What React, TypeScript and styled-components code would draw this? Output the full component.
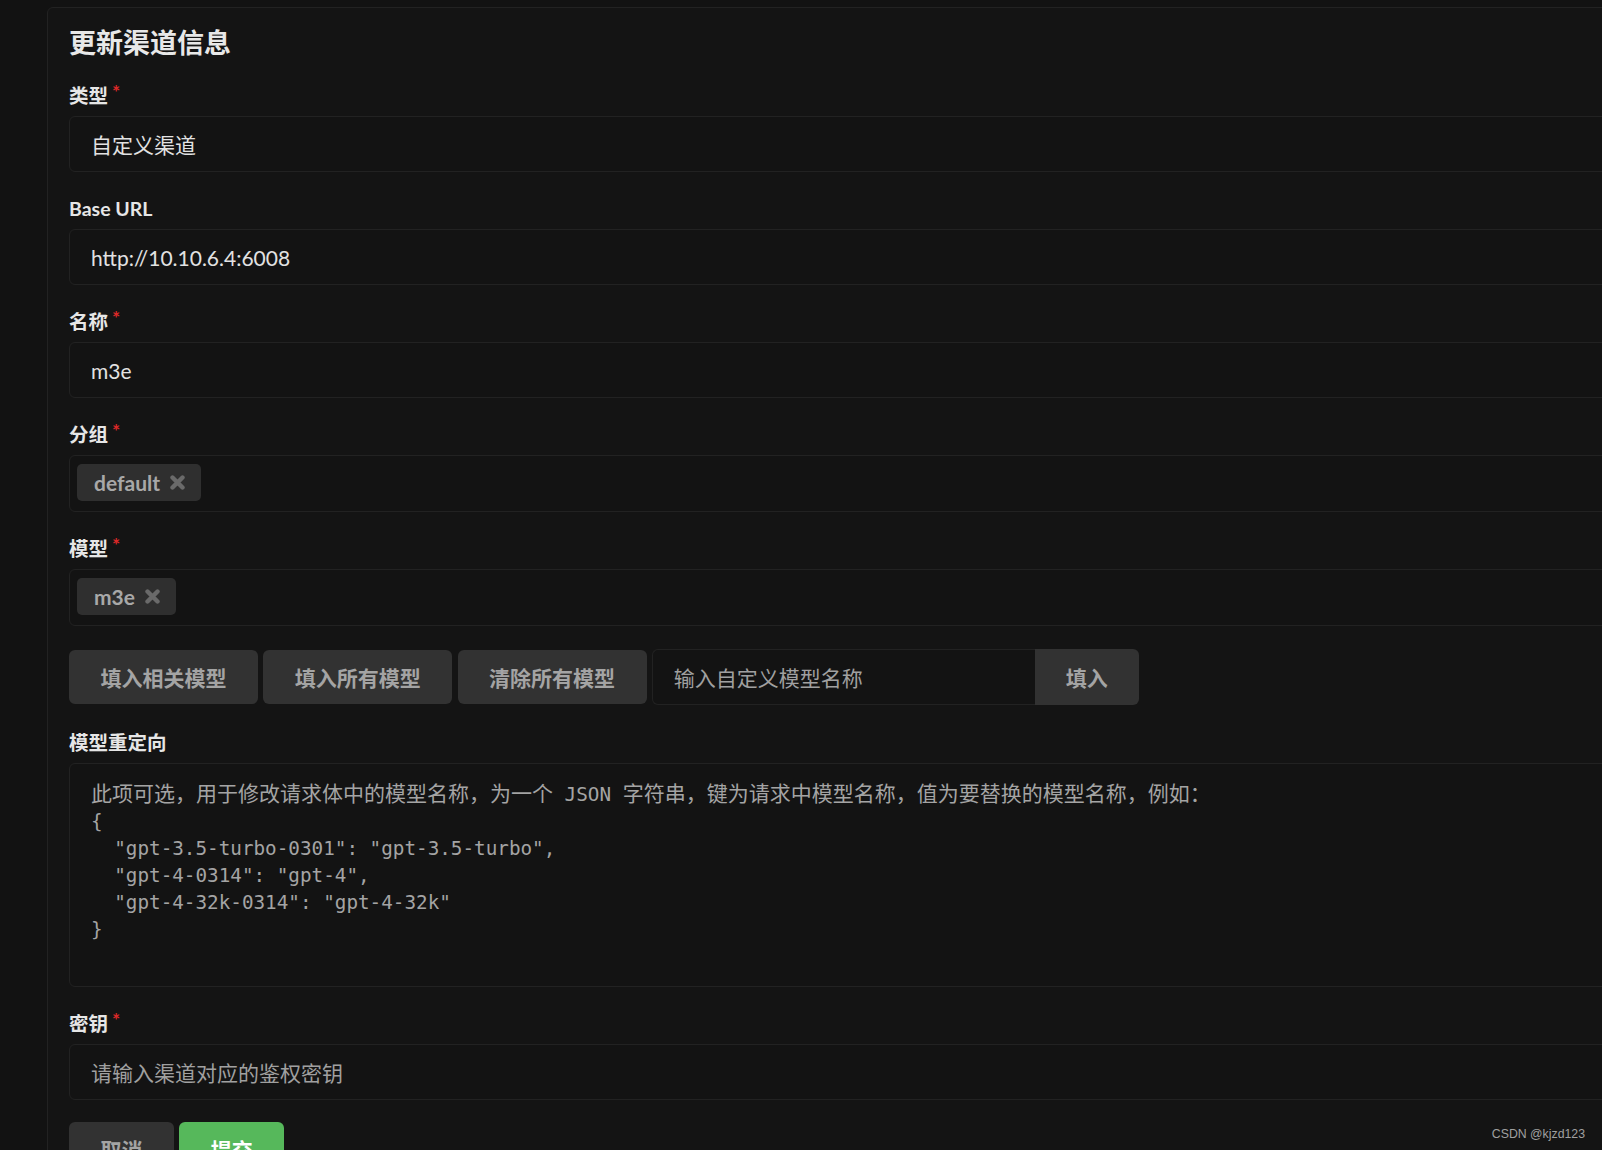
import React from 'react';
import styled, { createGlobalStyle, css } from 'styled-components';

const GlobalStyle = createGlobalStyle`
  html, body {
    margin: 0;
    padding: 0;
    background: #121212;
    overflow: hidden;
  }
  body {
    font-family: Lato, "Noto Sans CJK SC", sans-serif;
    -webkit-font-smoothing: antialiased;
  }
  * { box-sizing: border-box; }
`;

const Page = styled.div`
  position: relative;
  width: 1602px;
  height: 1150px;
  padding: 7px 0 0 47px;
  overflow: hidden;
`;

const Card = styled.div`
  width: 1700px;
  background: #141414;
  border: 1px solid #222222;
  border-radius: 6px;
  padding: 21px 21px 60px 21px;
`;

const Title = styled.h3`
  margin: 0 0 24px 0;
  font-size: 27px;
  line-height: 27px;
  font-weight: 700;
  color: #e8e8e8;
`;

const Field = styled.div<{ $mb?: number }>`
  margin-bottom: ${(p) => (p.$mb ?? 21)}px;
`;

const Label = styled.label<{ $required?: boolean }>`
  display: block;
  padding-top: 2px;
  margin-bottom: 6px;
  font-size: 19.5px;
  line-height: 28px;
  font-weight: 700;
  color: #e6e6e6;
  ${(p) =>
    p.$required &&
    css`
      &::after {
        content: '*';
        display: inline-block;
        vertical-align: top;
        margin: -0.2em 0 0 0.2em;
        color: #db2828;
      }
    `}
`;

const TextInput = styled.input`
  display: block;
  width: 100%;
  height: 56px;
  padding: 0 21px;
  margin: 0;
  background: #131313;
  border: 1px solid #222222;
  border-radius: 6px;
  font-family: Lato, "Noto Sans CJK SC", sans-serif;
  font-size: 21px;
  color: #e2e2e2;
  outline: none;
  &::placeholder {
    color: #a0a0a0;
  }
`;

const Dropdown = styled.div`
  display: flex;
  align-items: flex-start;
  gap: 6px;
  height: 57px;
  padding: 8px 7px;
  background: #131313;
  border: 1px solid #222222;
  border-radius: 6px;
`;

const Chip = styled.span`
  display: inline-flex;
  align-items: center;
  height: 37px;
  padding: 0 16px 0 17px;
  background: #2f2f2f;
  border-radius: 5px;
  font-size: 21px;
  line-height: 1;
  font-weight: 700;
  color: #a8a8a8;
`;

const ChipDelete = styled.svg`
  margin-left: 10px;
  flex: none;
`;

const ButtonRow = styled.div<{ $mt?: number; $mb?: number }>`
  display: flex;
  align-items: flex-start;
  gap: 5.25px;
  margin-top: ${(p) => p.$mt ?? 0}px;
  margin-bottom: ${(p) => p.$mb ?? 0}px;
`;

const Button = styled.button<{ $positive?: boolean }>`
  height: 54px;
  padding: 0 31.5px;
  margin: 0;
  border: none;
  border-radius: 6px;
  background: ${(p) => (p.$positive ? '#56b85b' : '#323232')};
  color: ${(p) => (p.$positive ? '#ffffff' : '#a4a4a4')};
  font-family: Lato, "Noto Sans CJK SC", sans-serif;
  font-size: 21px;
  line-height: 1;
  font-weight: 700;
  white-space: nowrap;
  cursor: pointer;
`;

const ActionInput = styled.div`
  display: flex;
  height: 56px;
  margin-top: -1px;
`;

const ActionField = styled.input`
  width: 383px;
  height: 56px;
  padding: 0 21px;
  margin: 0;
  background: #131313;
  border: 1px solid #222222;
  border-right: none;
  border-radius: 6px 0 0 6px;
  font-family: Lato, "Noto Sans CJK SC", sans-serif;
  font-size: 21px;
  color: #e2e2e2;
  outline: none;
  &::placeholder {
    color: #a0a0a0;
  }
`;

const ActionButton = styled.button`
  width: 104px;
  height: 56px;
  padding: 0;
  margin: 0;
  border: none;
  border-radius: 0 6px 6px 0;
  background: #323232;
  color: #a4a4a4;
  font-family: Lato, "Noto Sans CJK SC", sans-serif;
  font-size: 21px;
  font-weight: 700;
  cursor: pointer;
`;

const RedirectBox = styled.div`
  height: 224px;
  padding: 15px 21px;
  background: #131313;
  border: 1px solid #222222;
  border-radius: 6px;
  font-family: "Noto Sans CJK SC", sans-serif;
  font-size: 21px;
  line-height: 27px;
  color: #a4a4a4;
  white-space: pre;
  overflow: hidden;
`;

const Mono = styled.span`
  font-family: "DejaVu Sans Mono", "Liberation Mono", monospace;
  font-size: 19.3px;
  line-height: 20px;
`;

const Watermark = styled.div`
  position: absolute;
  right: 17px;
  bottom: 9px;
  font-family: "Liberation Sans", Arial, sans-serif;
  font-size: 12.3px;
  color: #a0a0a0;
`;

const DeleteIcon = () => (
  <ChipDelete width="15" height="15" viewBox="0 0 15 15">
    <path
      d="M2.5 2.5 L12.5 12.5 M12.5 2.5 L2.5 12.5"
      stroke="#6a6a6a"
      strokeWidth="4.4"
      strokeLinecap="round"
      fill="none"
    />
  </ChipDelete>
);

export default function App() {
  return (
    <>
      <GlobalStyle />
      <Page>
        <Card>
          <Title>更新渠道信息</Title>

          <Field>
            <Label $required>类型</Label>
            <TextInput readOnly defaultValue="自定义渠道" />
          </Field>

          <Field>
            <Label>Base URL</Label>
            <TextInput readOnly defaultValue="http://10.10.6.4:6008" />
          </Field>

          <Field>
            <Label $required>名称</Label>
            <TextInput readOnly defaultValue="m3e" />
          </Field>

          <Field>
            <Label $required>分组</Label>
            <Dropdown>
              <Chip>
                default
                <DeleteIcon />
              </Chip>
            </Dropdown>
          </Field>

          <Field $mb={0}>
            <Label $required>模型</Label>
            <Dropdown>
              <Chip>
                m3e
                <DeleteIcon />
              </Chip>
            </Dropdown>
          </Field>

          <ButtonRow $mt={24} $mb={22}>
            <Button>填入相关模型</Button>
            <Button>填入所有模型</Button>
            <Button>清除所有模型</Button>
            <ActionInput>
              <ActionField placeholder="输入自定义模型名称" />
              <ActionButton>填入</ActionButton>
            </ActionInput>
          </ButtonRow>

          <Field>
            <Label>模型重定向</Label>
            <RedirectBox>
              {'此项可选，用于修改请求体中的模型名称，为一个'}
              <Mono>{' JSON '}</Mono>
              {'字符串，键为请求中模型名称，值为要替换的模型名称，例如：\n'}
              <Mono>
                {'{\n  "gpt-3.5-turbo-0301": "gpt-3.5-turbo",\n  "gpt-4-0314": "gpt-4",\n  "gpt-4-32k-0314": "gpt-4-32k"\n}'}
              </Mono>
            </RedirectBox>
          </Field>

          <Field $mb={22}>
            <Label $required>密钥</Label>
            <TextInput placeholder="请输入渠道对应的鉴权密钥" />
          </Field>

          <ButtonRow>
            <Button>取消</Button>
            <Button $positive>提交</Button>
          </ButtonRow>
        </Card>
        <Watermark>CSDN @kjzd123</Watermark>
      </Page>
    </>
  );
}
